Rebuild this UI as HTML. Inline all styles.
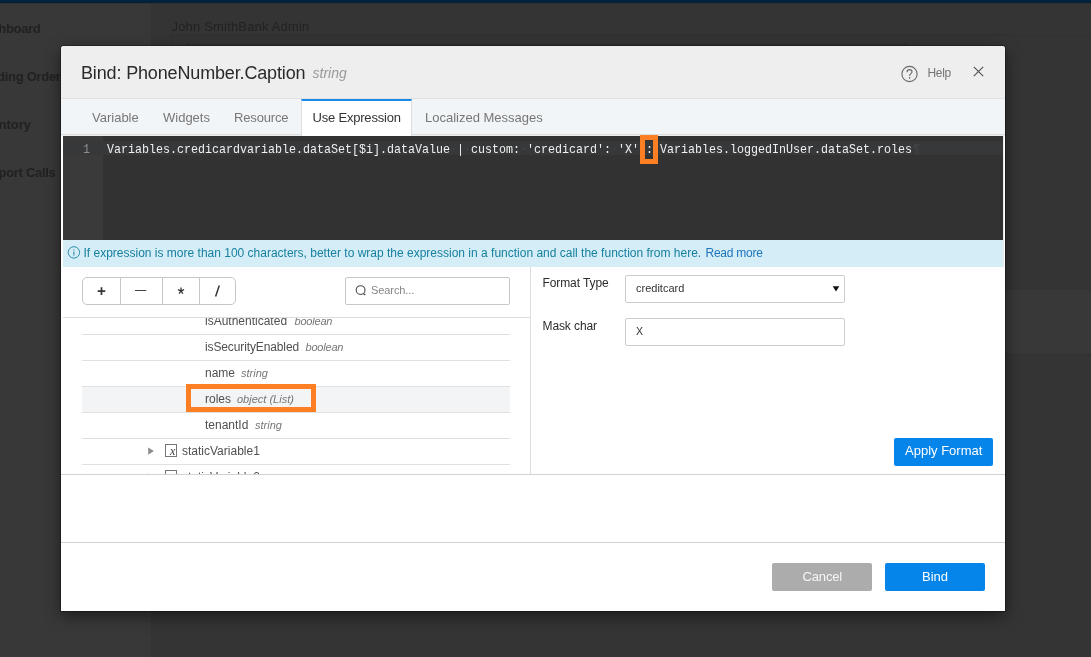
<!DOCTYPE html>
<html>
<head>
<meta charset="utf-8">
<title>Bind: PhoneNumber.Caption</title>
<style>
*{box-sizing:border-box;margin:0;padding:0}
html,body{width:1091px;height:657px;overflow:hidden}
body{position:relative;background:#343434;font-family:"Liberation Sans",sans-serif;font-size:13px;color:#333}
#root{position:absolute;left:0;top:0;width:1091px;height:657px;overflow:hidden;will-change:transform}
.abs{position:absolute}
.t{position:absolute;white-space:nowrap;line-height:1}
/* ---------- dimmed background app ---------- */
#topbar{left:0;top:0;width:1091px;height:3px;background:#02213b}
#sidebar{left:0;top:3px;width:152px;height:654px;background:#383838;border-right:1px dotted #2d2d2d}
.nav{font-weight:bold;font-size:13px;letter-spacing:-0.3px;color:#212121}
#crumb{left:171.5px;top:20px;font-size:13px;letter-spacing:0.18px;color:#222222}
/* ---------- modal ---------- */
#modal{left:61px;top:46px;width:944px;height:565px;background:#fff;border-radius:3px 3px 0 0;box-shadow:0 0 0 1px rgba(0,0,0,.28),0 5px 15px rgba(0,0,0,.5);overflow:hidden}
#mhead{left:0;top:0;width:944px;height:53px;background:#eeeeee;border-bottom:1px solid #e2e2e2}
#tabs{left:0;top:53px;width:944px;height:36px;background:#f1f5f7;border-bottom:1px solid #dddddd;box-shadow:0 1px 0 #eeeeee}
#tabactive{left:240px;top:53px;width:111px;height:37px;background:#fff;border-top:2px solid #1b8ae8;border-left:1px solid #dedede;border-right:1px solid #dedede}
.tab{font-size:13px;color:#777}
#editor{left:2px;top:90px;width:940px;height:104px;background:#323232}
#gutter{left:0;top:0;width:40px;height:104px;background:#3a3a3a}
#activeline{left:0;top:5px;width:940px;height:14px;background:#37383a}
.code i{font-style:normal;color:#474747}
#hl1{left:577px;top:-1px;width:18px;height:29px;border:5px solid #fd7f23}
.code{font-family:"Liberation Mono",monospace;font-size:13.5px;color:#f1f1f1;transform:scaleX(0.864);transform-origin:0 0}
#info{left:2px;top:194px;width:940px;height:27px;background:#d5edf6}
#left{left:2px;top:221px;width:468px;height:207px;background:#fff;border-right:1px solid #dddddd;overflow:hidden}
#panelbottom{left:0;top:428px;width:944px;height:1px;background:#d2d2d2}
#footline{left:0;top:496px;width:944px;height:1px;background:#d2d2d2}

#ops{left:19px;top:10px;width:154px;height:28px;border:1px solid #c6c6c6;border-radius:5px;background:#fff}
.opdiv{position:absolute;top:0;width:1px;height:26px;background:#c6c6c6}
#search{left:282px;top:10px;width:165px;height:28px;border:1px solid #c8c8c8;border-radius:2px;background:#fff}
#treetop{left:0;top:50px;width:468px;height:1px;background:#dddddd}
.row{position:absolute;left:19px;width:428px;height:26px;border-bottom:1px solid #e0e0e0}
.rl{font-size:12px;color:#505050;transform:translateY(0.6px)}
.rt{font-size:11px;font-style:italic;color:#777;transform:translateY(0.6px)}
#rolesbox{left:123px;top:117px;width:130px;height:28px;border:5px solid #fd7f23}
.field{position:absolute;border:1px solid #cccccc;border-radius:2px;background:#fff}
.lab{font-size:12px;color:#2c2c2c;letter-spacing:-0.1px}
.btn{position:absolute;border-radius:2px;color:#fff;font-size:14px;text-align:center}
</style>
</head>
<body>
<div id="root">
<!-- background app, dimmed by the overlay -->
<div id="topbar" class="abs"></div>
<div id="sidebar" class="abs"></div>
<div id="n1" class="t nav" style="right:1050.5px;top:22px">ashboard</div>
<div id="n2" class="t nav" style="right:1023.5px;top:70px">ending Orders</div>
<div id="n3" class="t nav" style="right:1060px;top:118px;letter-spacing:0">nventory</div>
<div id="n4" class="t nav" style="right:1035.5px;top:166px">upport Calls</div>
<div id="crumb" class="t">John SmithBank Admin</div>
<div class="abs" style="left:0;top:3px;width:1091px;height:1px;border-top:1px dotted #2e2e2e"></div>
<div class="abs" style="left:172px;top:35px;width:1000px;height:20px;border-left:1px dotted #2d2d2d;border-top:1px dotted #2d2d2d"></div>
<div class="abs" style="left:187px;top:44px;width:720px;height:10px;border-top:1px dotted #262626"></div>
<div class="abs" style="left:152px;top:290px;width:939px;height:65px;background:#383838;border-bottom:1px dotted #2b2b2b"></div>

<!-- modal dialog -->
<div id="modal" class="abs">
  <div id="mhead" class="abs"></div>
  <div id="title" class="t" style="left:20px;top:18px;font-size:18px;letter-spacing:-0.15px;color:#2a2a2a">Bind: PhoneNumber.Caption</div>
  <div id="ttype" class="t" style="left:251.5px;top:20px;font-size:14px;font-style:italic;color:#9a9a9a">string</div>
  <svg class="abs" style="left:839px;top:19px" width="18" height="18" viewBox="0 0 18 18">
    <circle cx="9.5" cy="9" r="7.6" fill="none" stroke="#6a6a6a" stroke-width="1.1"/>
    <path d="M7 7.2 C7 5.4 8.1 4.6 9.5 4.6 C11 4.6 12 5.5 12 6.8 C12 8.6 9.6 8.8 9.6 10.9" fill="none" stroke="#6a6a6a" stroke-width="1.1"/>
    <circle cx="9.6" cy="12.9" r="0.8" fill="#6a6a6a"/>
  </svg>
  <div id="help" class="t" style="left:866.5px;top:21px;font-size:12px;letter-spacing:-0.3px;color:#747474">Help</div>
  <svg class="abs" style="left:911px;top:19px" width="14" height="14" viewBox="0 0 14 14">
    <path d="M1.8 1.8 L11.2 11.2 M11.2 1.8 L1.8 11.2" stroke="#555" stroke-width="1.2" fill="none"/>
  </svg>
  <div id="tabs" class="abs"></div>
  <div id="tabactive" class="abs"></div>
  <div id="tab1" class="t tab" style="left:31px;top:65px">Variable</div>
  <div id="tab2" class="t tab" style="left:102px;top:65px">Widgets</div>
  <div id="tab3" class="t tab" style="left:173px;top:65px;letter-spacing:-0.15px">Resource</div>
  <div id="tab4" class="t tab" style="left:251.5px;top:65px;color:#333;letter-spacing:-0.2px">Use Expression</div>
  <div id="tab5" class="t tab" style="left:364px;top:65px">Localized Messages</div>
  <div id="editor" class="abs">
    <div id="gutter" class="abs"></div>
    <div id="activeline" class="abs"></div>
    <div id="lnum" class="t code" style="left:19.5px;top:7px;color:#8c8c8c">1</div>
    <div id="code" class="t code" style="left:44px;top:7px">Variables.credicardvariable.dataSet[$i].dataValue<i>&middot;</i>|<i>&middot;</i>custom:<i>&middot;</i>'credicard':<i>&middot;</i>'X'<i>&middot;</i>:<i>&middot;</i>Variables.loggedInUser.dataSet.roles</div>
    <div id="eol" class="t code" style="left:850px;top:7px;color:#454545">&para;</div>
    <div id="hl1" class="abs"></div>
  </div>
  <div id="info" class="abs">
    <svg class="abs" style="left:3px;top:5px" width="16" height="16" viewBox="0 0 16 16">
      <circle cx="7.9" cy="7.4" r="5.7" fill="none" stroke="#2b8cab" stroke-width="1"/>
      <path d="M7.9 6.6 V10.6" stroke="#2b8cab" stroke-width="1.1" fill="none"/>
      <circle cx="7.9" cy="4.9" r="0.65" fill="#2b8cab"/>
    </svg>
    <div id="infotext" class="t" style="left:20.5px;top:7px;font-size:12px;color:#17809f">If expression is more than 100 characters, better to wrap the expression in a function and call the function from here.</div>
    <div id="readmore" class="t" style="left:642.5px;top:7px;font-size:12px;letter-spacing:-0.25px;color:#1c74bc">Read more</div>
  </div>
  <div id="left" class="abs">
    <div id="ops" class="abs">
      <div class="opdiv" style="left:37px"></div>
      <div class="opdiv" style="left:79px"></div>
      <div class="opdiv" style="left:116px"></div>
      <svg class="abs" style="left:0;top:0" width="153" height="26" viewBox="0 0 153 26">
        <path d="M18.5 9.3 V16.9 M14.7 13.1 H22.3" stroke="#333" stroke-width="1.7" fill="none"/>
        <path d="M52 12.5 H63.2" stroke="#444" stroke-width="1" fill="none"/>
        <path d="M98 9.6 V12.8 M98 12.8 L94.9 11.7 M98 12.8 L101.1 11.7 M98 12.8 L96.1 15.6 M98 12.8 L99.9 15.6" stroke="#333" stroke-width="1.25" fill="none"/>
        <path d="M136.3 7.6 L132.6 18.6" stroke="#333" stroke-width="1.45" fill="none"/>
      </svg>
    </div>
    <div id="search" class="abs">
      <svg class="abs" style="left:8px;top:6px" width="14" height="14" viewBox="0 0 14 14">
        <circle cx="6.6" cy="6.1" r="4.4" fill="none" stroke="#4c4c4c" stroke-width="1.1"/>
        <path d="M9.4 9.7 L11.3 11.0" stroke="#4c4c4c" stroke-width="1.3" fill="none"/>
      </svg>
      <div id="stext" class="t" style="left:25px;top:7px;font-size:11px;letter-spacing:-0.08px;color:#868686">Search...</div>
    </div>
    <div class="row" style="top:42px"></div>
    <div class="row" style="top:68px"></div>
    <div class="row" style="top:94px"></div>
    <div class="row" style="top:120px;background:#f3f4f6"></div>
    <div class="row" style="top:146px"></div>
    <div class="row" style="top:172px"></div>
    <div class="row" style="top:198px"></div>
    <div id="r1" class="t rl" style="left:142px;top:47px">isAuthenticated</div><div id="r1t" class="t rt" style="left:231.5px;top:48px;letter-spacing:-0.2px">boolean</div>
    <div id="r2" class="t rl" style="left:142px;top:73px;letter-spacing:-0.12px">isSecurityEnabled</div><div id="r2t" class="t rt" style="left:242.5px;top:74px;letter-spacing:-0.2px">boolean</div>
    <div id="r3" class="t rl" style="left:142px;top:99px">name</div><div id="r3t" class="t rt" style="left:178px;top:100px">string</div>
    <div id="r4" class="t rl" style="left:142px;top:125px">roles</div><div id="r4t" class="t rt" style="left:174px;top:126px">object (List)</div>
    <div id="r5" class="t rl" style="left:142px;top:151px">tenantId</div><div id="r5t" class="t rt" style="left:192px;top:152px">string</div>
    <div id="r6" class="t rl" style="left:119px;top:177px">staticVariable1</div>
    <div id="r7" class="t rl" style="left:119px;top:203px">staticVariable2</div>
    <svg class="abs" style="left:83px;top:176px" width="34" height="42" viewBox="0 0 34 42">
      <path d="M2.2 4.4 L7.9 8.1 L2.2 11.8 Z" fill="#8c8c8c"/>
      <rect x="19.5" y="1.5" width="11" height="12" fill="#fff" stroke="#757575" stroke-width="1"/>
      <path d="M2.2 30.4 L7.9 34.1 L2.2 37.8 Z" fill="#8c8c8c"/>
      <rect x="19.5" y="27.5" width="11" height="12" fill="#fff" stroke="#757575" stroke-width="1"/>
    </svg>
    <div class="t" style="left:107px;top:177.5px;font-family:'Liberation Serif',serif;font-style:italic;font-size:12px;color:#3c3c3c">x</div>
    <div class="t" style="left:107px;top:203.5px;font-family:'Liberation Serif',serif;font-style:italic;font-size:12px;color:#3c3c3c">x</div>
    <div class="abs" style="left:0;top:39px;width:467px;height:11px;background:#fff"></div>
    <div id="treetop" class="abs"></div>
    <div id="rolesbox" class="abs"></div>
  </div>
  <!-- right panel -->
  <div id="lab1" class="t lab" style="left:481.5px;top:231px">Format Type</div>
  <div class="field" style="left:564px;top:229px;width:220px;height:28px"></div>
  <div id="sel" class="t" style="left:575px;top:237px;font-size:11px;color:#333">creditcard</div>
  <svg class="abs" style="left:770px;top:239px" width="10" height="8" viewBox="0 0 10 8"><path d="M1.7 1.3 H8.3 L5 6.6 Z" fill="#111"/></svg>
  <div id="lab2" class="t lab" style="left:481.5px;top:274px">Mask char</div>
  <div class="field" style="left:564px;top:272px;width:220px;height:28px"></div>
  <div id="maskx" class="t" style="left:575px;top:280px;font-size:10.5px;color:#333">X</div>
  <div class="btn" style="left:833px;top:392px;width:99px;height:28px;background:#0584ea"></div>
  <div id="applytxt" class="t" style="left:844px;top:398px;font-size:13px;color:#fff">Apply Format</div>
  <div class="btn" style="left:711px;top:517px;width:100px;height:28px;background:#acacac"></div>
  <div id="canceltxt" class="t" style="left:741.5px;top:524px;font-size:13px;letter-spacing:-0.15px;color:#f6f6f6">Cancel</div>
  <div class="btn" style="left:824px;top:517px;width:100px;height:28px;background:#0584ea"></div>
  <div id="bindtxt" class="t" style="left:861px;top:524px;font-size:13px;color:#fff">Bind</div>
  <div class="abs" style="left:942px;top:90px;width:1px;height:131px;background:#e8e8e8"></div>
  <div id="panelbottom" class="abs"></div>
  <div id="footline" class="abs"></div>
</div>
</div>
</body>
</html>
